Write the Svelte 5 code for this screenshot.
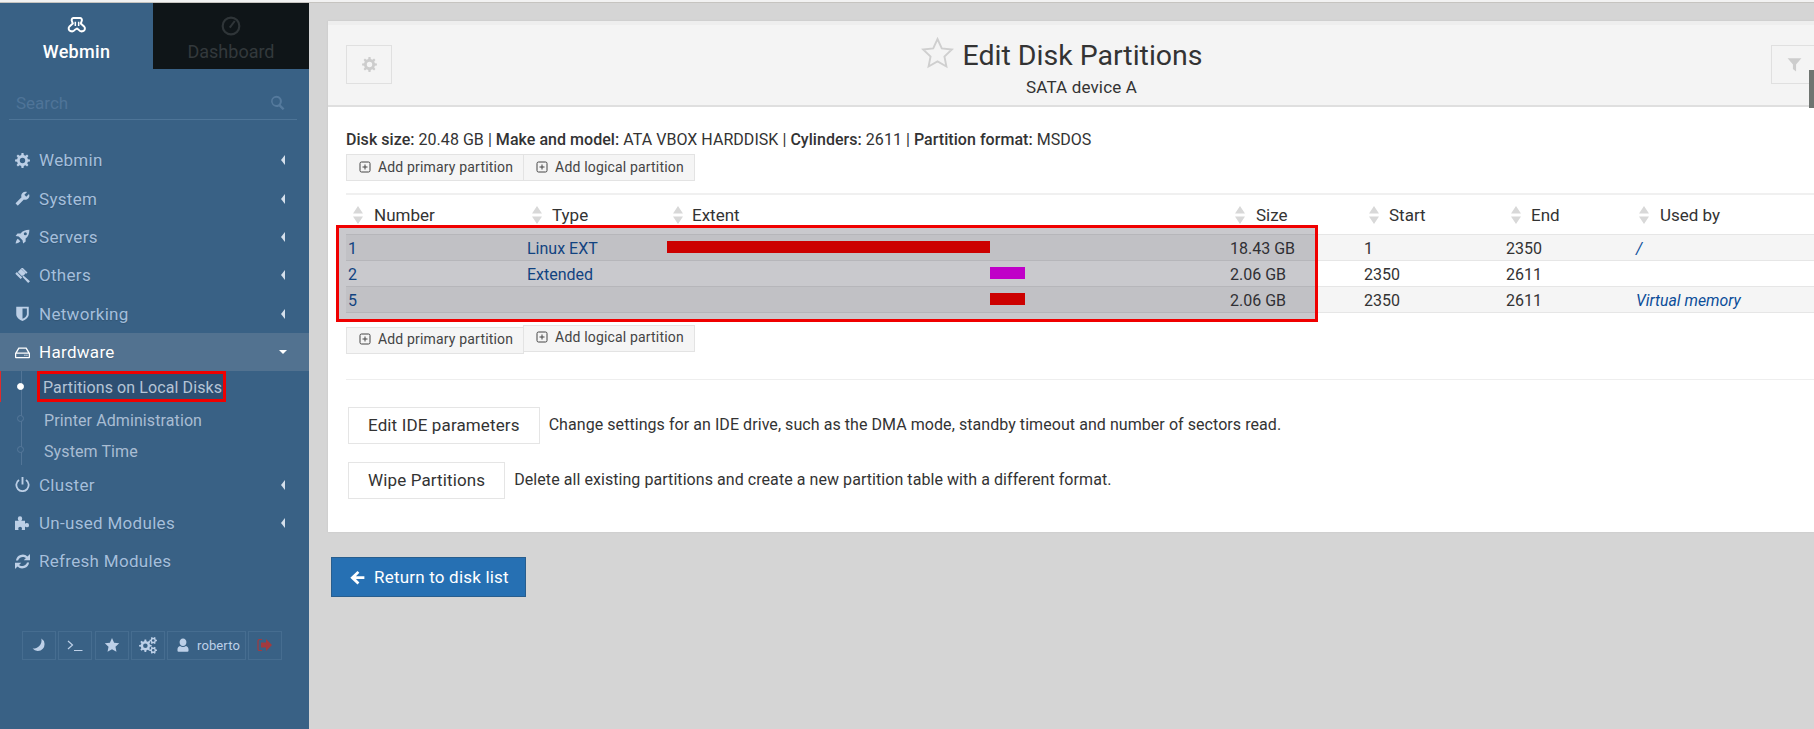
<script>
  // builds a cog outline so every gear in the page shares one shape
  function gear(cx, cy, r, teeth = 8) {
    let d = '';
    const step = (Math.PI * 2) / teeth;
    for (let i = 0; i < teeth; i++) {
      const a = i * step;
      const pts = [
        [r * 0.74, a - step * 0.3],
        [r, a - step * 0.17],
        [r, a + step * 0.17],
        [r * 0.74, a + step * 0.3]
      ];
      for (const [len, ang] of pts) {
        d += (d ? 'L' : 'M') + (cx + len * Math.cos(ang)).toFixed(2) + ' ' + (cy + len * Math.sin(ang)).toFixed(2);
      }
    }
    const h = r * 0.36;
    return d + `zM${cx - h} ${cy}a${h} ${h} 0 1 0 ${h * 2} 0a${h} ${h} 0 1 0 ${-h * 2} 0z`;
  }

  const icons = {
    cog: gear(12, 12, 12),
    wrench: 'M1.3 19l9.1-9.1c-.9-2.3-.4-5 1.5-6.9 2-2 5-2.4 7.4-1.3L15 6l3 3 4.400-4.300c1.200 2.400.7 5.400-1.300 7.400-1.900 1.900-4.600 2.400-6.900 1.500l-9.100 9.100c-.4.4-1 .4-1.400 0l-2.300-2.300c-.5-.4-.5-1.100-.1-1.400z',
    rocket: 'M23 1c-6.500 0-11 2-14 6H4l-3 4 5 1 6 6 1 5 4-3v-5c4-3 6-7.500 6-14zM16.500 5a2.500 2.500 0 1 1 0 5 2.500 2.500 0 0 1 0-5zM4.500 15.500C2.500 17 1.500 19.500 1 23c3.500-.5 6-1.500 7.500-3.500z',
    gavel: 'M9.500 1l7.500 7.500-5 5.500-7.500-7.500zM.5 9l2.500-2.500 8.500 8.500-2.500 2.500zM9.500 .5l8.500 8.500 2-2L12 -.5zM13 11.500l11 9.500-3 3-10-11z',
    shield: 'M2 1h20v12c0 5.500-5.500 8.500-10 11-4.500-2.500-10-5.500-10-11zM12 4v16.500c3.500-1.800 7-4.500 7-7.500V4z',
    hdd: 'M5.500 4h13L24 13v6.500a1.500 1.500 0 0 1-1.500 1.500h-21A1.500 1.500 0 0 1 0 19.500V13zM6.800 6l-3.500 6h17.400l-3.500-6zM2 14v5h20v-5zM15 15.500h1.800v1.800H15zM18.200 15.500H20v1.800h-1.800z',
    power: 'M13.500 0h-3v12h3zM18.500 3.500l-1.800 2.300a8.400 8.400 0 1 1-9.400 0L5.500 3.500a11.300 11.300 0 1 0 13 0z',
    puzzle: 'M0 9h6c-1-1-1.500-2-1.500-3.500A3.500 3.500 0 0 1 11.500 5.500c0 1.500-.5 2.500-1.500 3.500h6v5c.8-.8 1.700-1.300 3-1.300a3.500 3.500 0 0 1 0 7c-1.300 0-2.200-.5-3-1.300V24H10.500c.5-1 .7-1.700.7-2.400a3 3 0 0 0-6 0c0 .7.2 1.400.7 2.400H0z',
    refresh: 'M20 4A11 11 0 0 0 1.500 10.500h3.400A7.800 7.800 0 0 1 17.500 6.500L14 10h10V0zM4 20A11 11 0 0 0 22.500 13.500h-3.400A7.800 7.800 0 0 1 6.500 17.500L10 14H0v10z',
    moon: 'M16 1A11.500 11.500 0 1 1 1 18 A14 14 0 0 0 16 1z',
    star: 'M12 1.500l3.200 7 7.600.9-5.600 5.200 1.500 7.500L12 18.300l-6.700 3.800 1.500-7.500-5.600-5.200 7.600-.9z',
    cogs: gear(8.500, 13, 8.500) + gear(19, 6, 5, 6) + gear(19, 19, 5, 6),
    user: 'M12 1a5.800 5.800 0 0 1 5.800 6.500c0 3.200-2.300 6-5.800 6s-5.800-2.800-5.800-6A5.800 5.800 0 0 1 12 1zM7 13.500c1.300 1.300 3 2 5 2s3.700-.7 5-2c2.800.5 4.500 2.500 4.500 6.500v1.500a2 2 0 0 1-2 2h-15a2 2 0 0 1-2-2V20c0-4 1.700-6 4.500-6.500z',
    search: 'M10 1a9 9 0 0 1 7.200 14.400l6 6-2.800 2.800-6-6A9 9 0 1 1 10 1zm0 3.200a5.800 5.800 0 1 0 0 11.600 5.800 5.800 0 0 0 0-11.600z',
    filter: 'M1 2h22l-8.500 10v11l-5-4v-7z',
    arrow: 'M12 1.500l3 3L9.500 10H23v4.500H9.500l5.500 5.500-3 3L.5 12.200z'
  };

  const menuTop = [
    { label: 'Webmin', icon: 'cog', arrow: true },
    { label: 'System', icon: 'wrench', arrow: true },
    { label: 'Servers', icon: 'rocket', arrow: true },
    { label: 'Others', icon: 'gavel', arrow: true },
    { label: 'Networking', icon: 'shield', arrow: true }
  ];
  const menuBottom = [
    { label: 'Cluster', icon: 'power', arrow: true },
    { label: 'Un-used Modules', icon: 'puzzle', arrow: true },
    { label: 'Refresh Modules', icon: 'refresh', arrow: false }
  ];

  const columns = [
    { name: 'Number', width: 178, sort: 7, text: 28 },
    { name: 'Type', width: 140, sort: 8, text: 28 },
    { name: 'Extent', width: 563, sort: 9, text: 28 },
    { name: 'Size', width: 135, sort: 8, text: 29 },
    { name: 'Start', width: 142, sort: 7, text: 27 },
    { name: 'End', width: 129, sort: 7, text: 27 },
    { name: 'Used by', width: 181, sort: 6, text: 27 }
  ];

  const partitions = [
    { num: 1, type: 'Linux EXT', offset: 0, width: 323, color: '#cc0000', size: '18.43 GB', start: 1, end: 2350, used: '/' },
    { num: 2, type: 'Extended', offset: 323, width: 35, color: '#c000c8', size: '2.06 GB', start: 2350, end: 2611, used: '' },
    { num: 5, type: '', offset: 323, width: 35, color: '#cc0000', size: '2.06 GB', start: 2350, end: 2611, used: 'Virtual memory' }
  ];
</script>

{#snippet icon(name, size, cls = '')}
  <svg class="icon {cls}" width={size} height={size} viewBox="0 0 24 24" fill-rule="evenodd"><path d={icons[name]} fill="currentColor" /></svg>
{/snippet}

{#snippet menuRow(item)}
  <li class="menu-row">
    {@render icon(item.icon, 15, 'menu-icon')}
    <span class="menu-label">{item.label}</span>
    {#if item.arrow}<i class="caret-left"></i>{/if}
  </li>
{/snippet}

{#snippet plusBtn(label, cls = '')}
  <button class="add-btn {cls}">
    <svg width="12" height="12" viewBox="0 0 12 12" fill="none" stroke="#444" stroke-width="1"><rect x="1" y="1" width="10" height="10" rx="1.500" /><path d="M3.500 6h5M6 3.500v5" /></svg>
    {label}
  </button>
{/snippet}

<div class="topline"></div>
<div class="page">
  <aside class="sidebar">
    <div class="tabs">
      <div class="tab active">
        <svg width="20" height="20" viewBox="0 0 24 24" fill="none" stroke="#fff" stroke-width="2.400" stroke-linejoin="round">
          <path d="M8 2.500h8c1.500 0 2.500 2 1.500 4l-1 2.500 4 3.500c1.800 1.800 1 5-1 5.500-2 .8-4 .5-5.500-1.500L12 15l-2.500 1.500C8 18.500 6 18.800 4 18c-2-.5-2.800-3.700-1-5.500l4-3.500-1-2.500c-1-2 0-4 1.500-4z" />
          <path d="M10 7v5M14 7v5" stroke-width="1.800" />
        </svg>
        <span>Webmin</span>
      </div>
      <div class="tab dark">
        <svg width="20" height="20" viewBox="0 0 24 24" fill="none" stroke="#2f3538" stroke-width="2.600">
          <circle cx="12" cy="12" r="10" />
          <path d="M10.500 14l6-8" stroke-width="2.400" />
          <path d="M5.500 13h.1M7.500 8.500h.1M11 6h.1" stroke-width="1.600" />
        </svg>
        <span>Dashboard</span>
      </div>
    </div>

    <div class="search">
      <input type="text" placeholder="Search" />
      {@render icon('search', 15, 'search-icon')}
    </div>

    <ul class="menu">
      {#each menuTop as item}
        {@render menuRow(item)}
      {/each}
      <li class="menu-row open">
        {@render icon('hdd', 15, 'menu-icon')}
        <span class="menu-label">Hardware</span>
        <i class="caret-down"></i>
      </li>
      <li class="sub-list">
        <div class="sub-row current"><i class="dot"></i><span class="marked">Partitions on Local Disks</span></div>
        <div class="sub-row"><i class="dot"></i><span>Printer Administration</span></div>
        <div class="sub-row"><i class="dot"></i><span>System Time</span></div>
      </li>
      {#each menuBottom as item}
        {@render menuRow(item)}
      {/each}
    </ul>

    <div class="foot">
      <button class="foot-btn">{@render icon('moon', 14)}</button>
      <button class="foot-btn">
        <svg width="16" height="14" viewBox="0 0 16 14" fill="none" stroke="currentColor" stroke-width="1.200"><path d="M1 3l4.500 4L1 11M7 12.500h8.500" /></svg>
      </button>
      <button class="foot-btn wide3">{@render icon('star', 16)}</button>
      <button class="foot-btn">{@render icon('cogs', 18)}</button>
      <button class="foot-btn user">{@render icon('user', 14)}<span>roberto</span></button>
      <button class="foot-btn">
        <svg width="16" height="14" viewBox="0 0 16 14" fill="none"><path d="M5 1.500H2.500A1.500 1.500 0 0 0 1 3v8a1.500 1.500 0 0 0 1.500 1.500H5" stroke="#a33a3f" stroke-width="1.200" /><path d="M9 1l6 6-6 6V9.500H4v-5h5z" fill="#a33a3f" /></svg>
      </button>
    </div>
  </aside>

  <main class="content">
    <section class="panel">
      <header class="panel-head">
        <button class="head-btn">{@render icon('cog', 15)}</button>
        <div class="titles">
          <h1>
            <svg class="title-star" width="33" height="32" viewBox="0 0 24 24" fill="none" stroke="#cfcfcf" stroke-width="1.400"><path d={icons.star} /></svg>
            Edit Disk Partitions
          </h1>
          <p>SATA device A</p>
        </div>
        <button class="head-btn filter">{@render icon('filter', 15)}</button>
      </header>

      <div class="panel-body">
        <p class="disk-info">
          <b>Disk size:</b> 20.48 GB | <b>Make and model:</b> ATA VBOX HARDDISK | <b>Cylinders:</b> 2611 | <b>Partition format:</b> MSDOS
        </p>
        <div class="add-row">
          {@render plusBtn('Add primary partition')}
          {@render plusBtn('Add logical partition')}
        </div>

        <div class="table-wrap">
          <table>
            <colgroup>
              {#each columns as c}<col style="width: {c.width}px" />{/each}
            </colgroup>
            <thead>
              <tr>
                {#each columns as c}
                  <th style="padding-left: {c.text}px">
                    <svg class="sort" style="left: {c.sort}px" width="10" height="18" viewBox="0 0 10 18" fill="#d8d8d8"><path d="M5 0l5 7.500H0zM5 18l-5-7.500h10z" /></svg>
                    {c.name}
                  </th>
                {/each}
              </tr>
            </thead>
            <tbody>
              {#each partitions as p}
                <tr>
                  <td class="link">{p.num}</td>
                  <td class="link">{p.type}</td>
                  <td><div class="bar" style="margin-left: {p.offset}px; width: {p.width}px; background: {p.color}"></div></td>
                  <td>{p.size}</td>
                  <td>{p.start}</td>
                  <td>{p.end}</td>
                  <td class="link used">{p.used}</td>
                </tr>
              {/each}
            </tbody>
          </table>
          <div class="marker"></div>
        </div>

        <div class="add-row lower">
          {@render plusBtn('Add primary partition', 'drop')}
          {@render plusBtn('Add logical partition')}
        </div>

        <hr />

        <div class="action first">
          <button class="plain-btn">Edit IDE parameters</button>
          <span>Change settings for an IDE drive, such as the DMA mode, standby timeout and number of sectors read.</span>
        </div>
        <div class="action">
          <button class="plain-btn">Wipe Partitions</button>
          <span>Delete all existing partitions and create a new partition table with a different format.</span>
        </div>
      </div>
    </section>

    <button class="return-btn">{@render icon('arrow', 15)} Return to disk list</button>
  </main>
</div>
<div class="thumb"></div>

<style>
  :global(body) {
    margin: 0;
    background: #d5d5d5;
    overflow: hidden;
  }
  * {
    box-sizing: border-box;
  }
  button {
    font-family: inherit;
    cursor: pointer;
  }
  .topline {
    height: 3px;
    background: #f2f2f2;
    border-bottom: 1px solid #c6c4c0;
  }
  .page {
    display: flex;
    width: 1814px;
    height: 726px;
    overflow: hidden;
    font-family: Roboto, "Liberation Sans", sans-serif;
    color: #333;
    font-size: 14px;
  }
  .icon {
    display: block;
    flex: none;
  }

  /* sidebar */
  .sidebar {
    width: 309px;
    flex: none;
    background: #396185;
  }
  .tabs {
    display: flex;
    height: 66px;
  }
  .tab {
    display: flex;
    flex-direction: column;
    align-items: center;
    padding-top: 13px;
    gap: 5px;
    font-size: 18px;
    line-height: 22px;
  }
  .tab.active {
    width: 153px;
    color: #fff;
    font-weight: 500;
    letter-spacing: 0.3px;
  }
  .tab.dark {
    flex: 1;
    background: #0f1518;
    color: #33393c;
  }
  .search {
    display: flex;
    align-items: center;
    margin: 14px 12px 0 9px;
    height: 37px;
    padding: 3px 12px 0 7px;
    border-bottom: 1px solid #4d7497;
  }
  .search input {
    flex: 1;
    min-width: 0;
    background: none;
    border: 0;
    outline: 0;
    padding: 0;
    font: 17px Roboto, sans-serif;
  }
  .search input::placeholder {
    color: #4f7498;
    opacity: 1;
  }
  .search :global(.search-icon) {
    color: #557a9d;
  }
  .menu {
    list-style: none;
    margin: 21px 0 0;
    padding: 0;
  }
  .menu-row {
    display: flex;
    align-items: center;
    height: 38.400px;
    padding: 0 15px;
    color: #a5bfdc;
    font-size: 17px;
    letter-spacing: 0.3px;
    text-shadow: 0 1px 1px rgba(0, 0, 0, 0.15);
  }
  .menu-row :global(.menu-icon) {
    color: #bccfe6;
    margin-right: 9px;
  }
  .menu-label {
    flex: 1;
  }
  .menu-row.open {
    background: #527290;
    color: #fff;
  }
  .menu-row.open :global(.menu-icon) {
    color: #fff;
  }
  .caret-left {
    width: 0;
    height: 0;
    border: 5px solid transparent;
    border-left: 0;
    border-right: 4px solid #d5e0ec;
    margin-right: 9px;
  }
  .caret-down {
    width: 0;
    height: 0;
    border: 4px solid transparent;
    border-bottom: 0;
    border-top: 4px solid #fff;
    margin-right: 7px;
  }
  .sub-list {
    position: relative;
  }
  .sub-list::before {
    content: '';
    position: absolute;
    left: 21px;
    top: 0;
    bottom: 0;
    width: 1px;
    background: #527597;
  }
  .sub-row {
    display: flex;
    align-items: center;
    height: 31px;
    padding-left: 17px;
    color: #a9bdd3;
    font-size: 16px;
    letter-spacing: 0.1px;
  }
  .sub-row span {
    padding-top: 3px;
  }
  .sub-row:nth-child(2) {
    margin-top: 1px;
  }
  .dot {
    position: relative;
    width: 7px;
    height: 7px;
    border: 1px solid #55789a;
    border-radius: 50%;
    background: #396185;
    margin-right: 20px;
    flex: none;
  }
  .current {
    border-left: 1px solid #e02b2b;
    padding-left: 16px;
  }
  .current .dot {
    background: #fff;
    border-color: #fff;
    margin-right: 13px;
  }
  .sub-row .marked {
    display: block;
    height: 31px;
    line-height: 28px;
    background: #2e4f72;
    border: 3px solid #f00000;
    padding: 0 3px;
    width: 189px;
    white-space: nowrap;
    color: #b5c4d6;
  }
  .foot {
    display: flex;
    gap: 2px;
    margin: 50px 0 0 22px;
  }
  .foot-btn {
    display: flex;
    align-items: center;
    justify-content: center;
    width: 34px;
    height: 29px;
    padding: 0;
    background: none;
    border: 1px solid #466d90;
    color: #bdd0e8;
  }
  .foot-btn.wide3 {
    margin-left: 1px;
  }
  .foot-btn.user {
    width: 79px;
    gap: 7px;
    padding-left: 3px;
    font-size: 13px;
    letter-spacing: 0.1px;
  }

  /* main */
  .content {
    flex: 1;
    min-width: 0;
    display: flex;
    flex-direction: column;
    align-items: flex-start;
    padding: 18px 0 0 19px;
  }
  .panel {
    width: 100%;
    height: 511px;
    background: #fff;
    border-top: 4px solid #eeeeee;
    box-shadow: 0 0 2px rgba(0, 0, 0, 0.08);
  }
  .panel-head {
    display: flex;
    height: 82px;
    background: #f4f4f4;
    border-bottom: 2px solid #dfdfdf;
    padding: 20px 0 0 18px;
  }
  .head-btn {
    width: 46px;
    height: 39px;
    display: flex;
    align-items: center;
    justify-content: center;
    background: none;
    border: 1px solid #e0e0e0;
    color: #cdcdcd;
    padding: 0;
    flex: none;
  }
  .head-btn.filter {
    margin-right: -3px;
  }
  .titles {
    flex: 1;
    text-align: center;
  }
  h1 {
    display: flex;
    justify-content: center;
    align-items: center;
    gap: 8px;
    margin: -10px 0 0 2px;
    height: 40px;
    font-size: 28.500px;
    font-weight: 400;
    color: #333;
  }
  .title-star {
    margin: -4px 0 0 -41px;
  }
  .titles p {
    margin: 2px 0 0;
    font-size: 17px;
    letter-spacing: 0.15px;
    line-height: 20px;
  }
  .panel-body {
    padding: 0 0 0 18px;
  }
  .disk-info {
    margin: 0;
    padding-top: 22px;
    height: 47px;
    font-size: 16px;
    letter-spacing: 0.04px;
    line-height: 22px;
    white-space: nowrap;
  }
  b {
    font-weight: 500;
  }
  .add-row {
    display: flex;
    align-items: flex-start;
  }
  .add-btn {
    display: flex;
    align-items: center;
    gap: 7px;
    height: 27px;
    padding: 0 10px 2px 12px;
    background: #f5f5f5;
    border: 1px solid #e3e3e3;
    color: #444;
    font-size: 14px;
    letter-spacing: 0.17px;
    margin-right: -1px;
  }
  .add-btn.drop {
    margin-top: 2px;
  }
  .table-wrap {
    position: relative;
    margin-top: 12px;
  }
  table {
    table-layout: fixed;
    width: 1468px;
    border-collapse: collapse;
    font-size: 16px;
    border-top: 2px solid #f0f0f0;
  }
  th {
    position: relative;
    height: 40px;
    padding-bottom: 0;
    padding-top: 1px;
    padding-right: 0;
    font-weight: 400;
    font-size: 17px;
    text-align: left;
    border-bottom: 1px solid #e6e6e6;
  }
  .sort {
    position: absolute;
    top: 11px;
  }
  td {
    height: 26px;
    padding: 2px 3px 0;
    border-bottom: 1px solid #e6e6e6;
  }
  td:nth-child(1),
  td:nth-child(5),
  td:nth-child(6) {
    padding-left: 2px;
  }
  td:nth-child(3) {
    padding-top: 0;
  }
  tbody tr:nth-child(odd) td {
    background: #f5f5f5;
  }
  .link {
    color: #0b4d99;
  }
  .used {
    font-style: italic;
    font-size: 15.800px;
  }
  .bar {
    position: relative;
    z-index: 2;
    height: 12px;
  }
  .marker {
    position: absolute;
    left: -10px;
    top: 32px;
    width: 982px;
    height: 97px;
    border: 3px solid #f00000;
    background: rgba(40, 40, 56, 0.25);
    z-index: 1;
  }
  .add-row.lower {
    margin-top: 12px;
  }
  hr {
    border: 0;
    border-top: 1px solid #eeeeee;
    margin: 25px 0 0;
  }
  .action {
    display: flex;
    align-items: center;
    gap: 9px;
    margin: 18px 0 0 2px;
    font-size: 16px;
    letter-spacing: 0.06px;
  }
  .action span {
    padding-bottom: 2px;
  }
  .action.first {
    margin-top: 27px;
  }
  .plain-btn {
    height: 37px;
    padding: 0 19px;
    background: #fff;
    border: 1px solid #e5e5e5;
    color: #333;
    font-size: 17px;
    letter-spacing: 0.13px;
  }
  .return-btn {
    display: flex;
    align-items: center;
    gap: 9px;
    margin: 25px 0 0 3px;
    width: 195px;
    height: 40px;
    padding: 0 0 0 18px;
    background: #2670b3;
    border: 1px solid #285e8e;
    color: #fff;
    font-size: 17px;
    letter-spacing: 0.2px;
  }
  .thumb {
    position: absolute;
    right: 0;
    top: 70px;
    width: 5px;
    height: 38px;
    background: #6f7471;
  }
</style>
